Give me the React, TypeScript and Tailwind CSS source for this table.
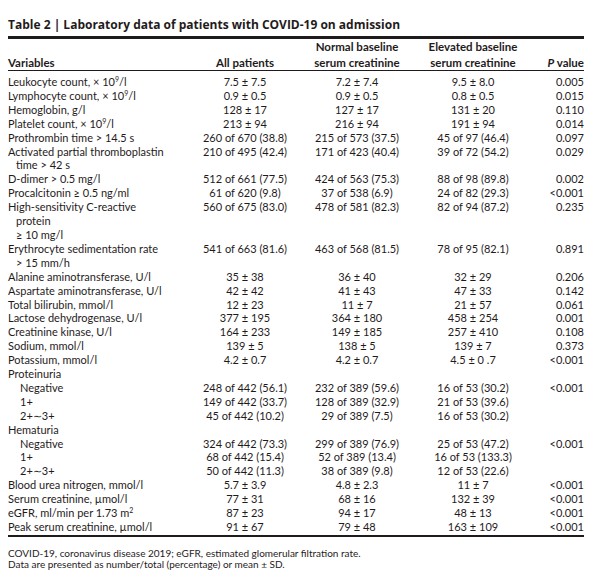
import type { ReactNode } from 'react';

type Row = {
  label: ReactNode[];
  indent?: boolean;
  all?: string;
  normal?: string;
  elevated?: string;
  p?: string;
};

const Sup = ({ children }: { children: ReactNode }) => (
  <span className="relative -top-[4px] text-[7px] leading-none">{children}</span>
);

const sup9 = (pre: string) => (
  <>
    {pre} × 10<Sup>9</Sup>/l
  </>
);

const rows: Row[] = [
  { label: [sup9('Leukocyte count,')], all: '7.5 ± 7.5', normal: '7.2 ± 7.4', elevated: '9.5 ± 8.0', p: '0.005' },
  { label: [sup9('Lymphocyte count,')], all: '0.9 ± 0.5', normal: '0.9 ± 0.5', elevated: '0.8 ± 0.5', p: '0.015' },
  { label: ['Hemoglobin, g/l'], all: '128 ± 17', normal: '127 ± 17', elevated: '131 ± 20', p: '0.110' },
  { label: [sup9('Platelet count,')], all: '213 ± 94', normal: '216 ± 94', elevated: '191 ± 94', p: '0.014' },
  { label: ['Prothrombin time > 14.5 s'], all: '260 of 670 (38.8)', normal: '215 of 573 (37.5)', elevated: '45 of 97 (46.4)', p: '0.097' },
  { label: ['Activated partial thromboplastin', 'time > 42 s'], all: '210 of 495 (42.4)', normal: '171 of 423 (40.4)', elevated: '39 of 72 (54.2)', p: '0.029' },
  { label: ['D-dimer > 0.5 mg/l'], all: '512 of 661 (77.5)', normal: '424 of 563 (75.3)', elevated: '88 of 98 (89.8)', p: '0.002' },
  { label: ['Procalcitonin ≥ 0.5 ng/ml'], all: '61 of 620 (9.8)', normal: '37 of 538 (6.9)', elevated: '24 of 82 (29.3)', p: '<0.001' },
  { label: ['High-sensitivity C-reactive', 'protein', '≥ 10 mg/l'], all: '560 of 675 (83.0)', normal: '478 of 581 (82.3)', elevated: '82 of 94 (87.2)', p: '0.235' },
  { label: ['Erythrocyte sedimentation rate', '> 15 mm/h'], all: '541 of 663 (81.6)', normal: '463 of 568 (81.5)', elevated: '78 of 95 (82.1)', p: '0.891' },
  { label: ['Alanine aminotransferase, U/l'], all: '35 ± 38', normal: '36 ± 40', elevated: '32 ± 29', p: '0.206' },
  { label: ['Aspartate aminotransferase, U/l'], all: '42 ± 42', normal: '41 ± 43', elevated: '47 ± 33', p: '0.142' },
  { label: ['Total bilirubin, mmol/l'], all: '12 ± 23', normal: '11 ± 7', elevated: '21 ± 57', p: '0.061' },
  { label: ['Lactose dehydrogenase, U/l'], all: '377 ± 195', normal: '364 ± 180', elevated: '458 ± 254', p: '0.001' },
  { label: ['Creatinine kinase, U/l'], all: '164 ± 233', normal: '149 ± 185', elevated: '257 ± 410', p: '0.108' },
  { label: ['Sodium, mmol/l'], all: '139 ± 5', normal: '138 ± 5', elevated: '139 ± 7', p: '0.373' },
  { label: ['Potassium, mmol/l'], all: '4.2 ± 0.7', normal: '4.2 ± 0.7', elevated: '4.5 ± 0 .7', p: '<0.001' },
  { label: ['Proteinuria'] },
  { label: ['Negative'], indent: true, all: '248 of 442 (56.1)', normal: '232 of 389 (59.6)', elevated: '16 of 53 (30.2)', p: '<0.001' },
  { label: ['1+'], indent: true, all: '149 of 442 (33.7)', normal: '128 of 389 (32.9)', elevated: '21 of 53 (39.6)' },
  { label: ['2+∼3+'], indent: true, all: '45 of 442 (10.2)', normal: '29 of 389 (7.5)', elevated: '16 of 53 (30.2)' },
  { label: ['Hematuria'] },
  { label: ['Negative'], indent: true, all: '324 of 442 (73.3)', normal: '299 of 389 (76.9)', elevated: '25 of 53 (47.2)', p: '<0.001' },
  { label: ['1+'], indent: true, all: '68 of 442 (15.4)', normal: '52 of 389 (13.4)', elevated: '16 of 53 (133.3)' },
  { label: ['2+∼3+'], indent: true, all: '50 of 442 (11.3)', normal: '38 of 389 (9.8)', elevated: '12 of 53 (22.6)' },
  { label: ['Blood urea nitrogen, mmol/l'], all: '5.7 ± 3.9', normal: '4.8 ± 2.3', elevated: '11 ± 7', p: '<0.001' },
  { label: ['Serum creatinine, µmol/l'], all: '77 ± 31', normal: '68 ± 16', elevated: '132 ± 39', p: '<0.001' },
  {
    label: [
      <>
        eGFR, ml/min per 1.73 m<Sup>2</Sup>
      </>,
    ],
    all: '87 ± 23',
    normal: '94 ± 17',
    elevated: '48 ± 13',
    p: '<0.001',
  },
  { label: ['Peak serum creatinine, µmol/l'], all: '91 ± 67', normal: '79 ± 48', elevated: '163 ± 109', p: '<0.001' },
];

const cols = 'grid grid-cols-[182px_110px_114px_118px_52px]';

export default function App() {
  return (
    <div
      className="w-[592px] h-[570px] bg-white px-[8px] text-[#1f1b1c] overflow-hidden"
      style={{ fontFamily: 'Lato, "Open Sans", sans-serif' }}
    >
      <h1
        className="pt-[17px] text-[12px] leading-[16px] font-bold"
        style={{ fontFamily: '"Open Sans", sans-serif' }}
      >
        Table 2 | Laboratory data of patients with COVID-19 on admission
      </h1>
      <div className="mt-[3px] h-[2.5px] bg-[#1f1b1c]" />

      <div className={`${cols} items-end h-[31px] text-[11.5px] leading-[16px] font-bold`}>
        <div>Variables</div>
        <div className="text-center">All patients</div>
        <div className="text-center">
          Normal baseline
          <br />
          serum creatinine
        </div>
        <div className="text-center">
          Elevated baseline
          <br />
          serum creatinine
        </div>
        <div className="text-right">
          <span className="italic">P</span> value
        </div>
      </div>
      <div className="h-[1.5px] bg-[#1f1b1c]" />

      <div className="pt-[4px] pb-[1px] text-[11px] leading-[13.9px]">
        {rows.map((r, i) => (
          <div key={i} className={cols}>
            <div className={r.indent ? 'pl-[12px]' : ''}>
              {r.label.map((l, j) => (
                <div key={j} className={j > 0 ? 'pl-[8px]' : ''}>
                  {l}
                </div>
              ))}
            </div>
            <div className="text-center">{r.all}</div>
            <div className="text-center">{r.normal}</div>
            <div className="text-center">{r.elevated}</div>
            <div className="text-right">{r.p}</div>
          </div>
        ))}
      </div>
      <div className="h-[2.5px] bg-[#1f1b1c]" />

      <div className="pt-[10px] text-[10px]">
        <p className="leading-[12px]">COVID-19, coronavirus disease 2019; eGFR, estimated glomerular filtration rate.</p>
        <p className="leading-[11px]">Data are presented as number/total (percentage) or mean ± SD.</p>
      </div>
    </div>
  );
}
